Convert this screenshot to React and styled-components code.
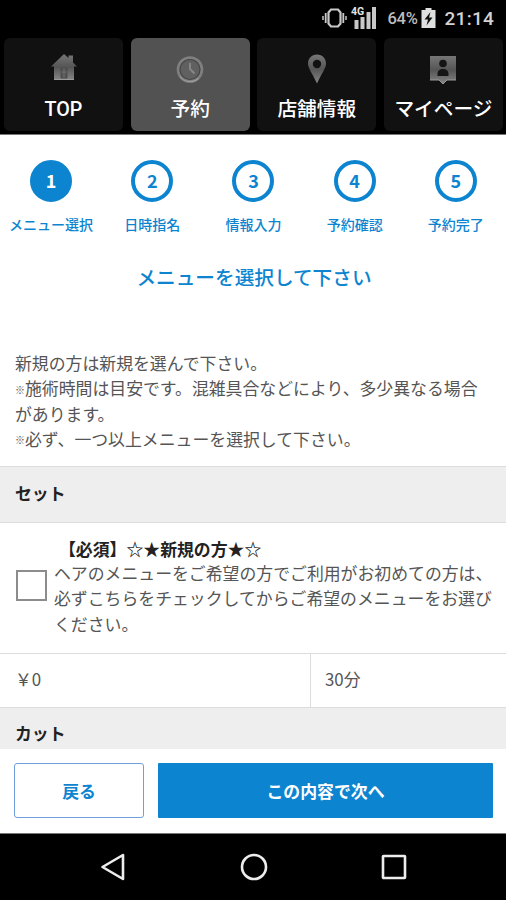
import React from 'react';
import styled, { createGlobalStyle, css } from 'styled-components';

const BLUE = '#0d84cf';
const LINE = '#dcdcdc';

const GlobalStyle = createGlobalStyle`
  * { box-sizing: border-box; }
  body {
    margin: 0;
    background: #fff;
    font-family: Roboto, "Noto Sans CJK JP", sans-serif;
    font-size: 16.87px;
    line-height: 25.3px;
    color: #555;
  }
  button { font: inherit; margin: 0; padding: 0; border: 0; }
`;

const Screen = styled.div`
  width: 506px;
  height: 900px;
  display: flex;
  flex-direction: column;
  overflow: hidden;
  background: #fff;
`;

const StatusBar = styled.header`
  flex: none;
  height: 36px;
  padding: 0 12px 0 0;
  display: flex;
  justify-content: flex-end;
  align-items: center;
  background: #000;
  color: #d2d2d2;
`;

const StatusIcon = styled.svg`
  display: block;
  margin-right: ${(p) => p.$gap}px;
`;

const Battery = styled.span`
  padding-top: 1px;
  font-size: 16.5px;
  font-weight: 500;
  letter-spacing: -0.3px;
  color: #bdbdbd;
  margin-right: 3px;
`;

const Clock = styled.span`
  padding-top: 2px;
  font-size: 19px;
  font-weight: 500;
  letter-spacing: 0.25px;
`;

const TabBar = styled.nav`
  flex: none;
  height: 99px;
  padding: 2px 3px 3px 4px;
  display: grid;
  grid-template-columns: repeat(4, 119px);
  justify-content: space-between;
  background: #000;
  border-bottom: 1px solid #777;
`;

const Tab = styled.button`
  display: flex;
  flex-direction: column;
  align-items: center;
  padding-top: 14px;
  border-radius: 6px;
  background: ${(p) => (p.$active ? '#525252' : '#111')};
  color: #fff;
  font-size: 19.7px;
  font-weight: 500;
  line-height: 28px;
  white-space: nowrap;
`;

const TabIcon = styled.svg`
  display: block;
  margin-bottom: 12px;
`;

const Main = styled.main`
  flex: 1;
  min-height: 0;
  overflow: hidden;
`;

const Steps = styled.ol`
  list-style: none;
  margin: 0;
  padding: 25px 0 0 0.5px;
  display: grid;
  grid-template-columns: repeat(5, 101.2px);
`;

const Step = styled.li`
  display: flex;
  flex-direction: column;
  align-items: center;
  color: ${BLUE};
  font-size: 14px;
  font-weight: 500;
  line-height: 20px;
  white-space: nowrap;
`;

const StepNumber = styled.span`
  width: 42px;
  height: 42px;
  margin-bottom: 13px;
  padding-bottom: 3px;
  display: flex;
  align-items: center;
  justify-content: center;
  border: 4px solid ${BLUE};
  border-radius: 50%;
  font-family: "Noto Sans CJK JP", sans-serif;
  font-size: 18px;
  font-weight: 700;
  ${(p) => p.$active && css`
    background: ${BLUE};
    color: #fff;
  `}
`;

const Title = styled.h1`
  margin: 29px 0 0;
  padding-left: 2px;
  text-align: center;
  color: ${BLUE};
  font-size: 19.65px;
  line-height: 30px;
  font-weight: 500;
`;

const Notes = styled.div`
  padding: 58px 15px 13px;
`;

const Note = styled.p`
  margin: 0;
`;

const Mark = styled.span`
  display: inline-block;
  width: 10px;
  font-size: 10px;
  font-weight: 700;
  vertical-align: 1.5px;
  line-height: 1;
  white-space: nowrap;
`;

const SectionHeader = styled.h2`
  margin: 0;
  height: 57px;
  padding: ${(p) => p.$top || 15}px 15px 0;
  border-top: 1.5px solid ${LINE};
  border-bottom: 1.5px solid ${LINE};
  background: #eee;
  color: #222;
  font-size: 16.87px;
  line-height: 25px;
  font-weight: 700;
`;

const MenuItem = styled.label`
  height: 130px;
  padding: 13px 12px 0 16px;
  display: flex;
`;

const Checkbox = styled.span`
  flex: none;
  width: 31px;
  height: 31px;
  margin: 34px 7px 0 0;
  border: 2px solid #8c8c8c;
  background: #fff;
`;

const ItemText = styled.div`
  min-width: 0;
`;

const ItemName = styled.div`
  margin-bottom: 0.5px;
  padding-left: 5px;
  color: #222;
  font-weight: 700;
  font-family: "Noto Sans CJK JP", sans-serif;
`;

const Details = styled.div`
  height: 54px;
  display: grid;
  grid-template-columns: 311px 1fr;
  border-top: 1px solid ${LINE};
`;

const Detail = styled.div`
  padding: 12px 14px 0 ${(p) => (p.$divided ? '14px' : '15px')};
  font-family: "Noto Sans CJK JP", sans-serif;
  ${(p) => !p.$divided && css`
    border-right: 1px solid ${LINE};
  `}
`;

const Actions = styled.footer`
  flex: none;
  height: 85px;
  padding: 14px 13px 15px 14px;
  display: grid;
  grid-template-columns: 130px 1fr;
  gap: 14px;
  background: #fff;
  border-bottom: 1px solid #777;
`;

const ActionButton = styled.button`
  padding-top: 4px;
  border-radius: 3px;
  font-weight: 700;
  ${(p) => p.$primary
    ? css`
      background: ${BLUE};
      color: #fff;
      border-radius: 1px;
    `
    : css`
      background: #fff;
      color: ${BLUE};
      && { border: 1px solid #6f9fdc; }
    `}
`;

const SystemBar = styled.div`
  flex: none;
  height: 66px;
  padding: 0 99px 1px 100px;
  display: flex;
  align-items: center;
  justify-content: space-between;
  background: #000;
`;

const SystemIcon = styled.svg`
  display: block;
  fill: none;
  stroke: #ededed;
  stroke-width: 2.6;
  stroke-linejoin: round;
`;

const Gradient = ({ id }) => (
  <defs>
    <linearGradient id={id} x1="0" y1="0" x2="0" y2="1">
      <stop offset="0" stopColor="#777" />
      <stop offset="0.5" stopColor="#555" />
      <stop offset="1" stopColor="#858585" />
    </linearGradient>
  </defs>
);

const HomeIcon = () => (
  <TabIcon width="28" height="32" viewBox="0 0 28 32">
    <Gradient id="home" />
    <path fill="url(#home)" d="M14 2 L18.5 6 V3.500 H23 V10.5 L27 14.5 H24 V28 H4 V14.5 H1 Z" />
    <path d="M11 16h6v10h-6z" fill="#555" stroke="#444" strokeWidth="0.8" />
    <path d="M14 16v10 M11 20h6" stroke="#777" strokeWidth="0.7" />
    <path d="M4 27.5h20" stroke="#999" strokeWidth="1" />
  </TabIcon>
);

const ClockIcon = () => (
  <TabIcon width="28" height="32" viewBox="0 0 28 32">
    <circle cx="14" cy="17.5" r="11.8" fill="#676767" stroke="#7f7f7f" strokeWidth="3" />
    <circle cx="14" cy="17.5" r="10" fill="#606060" stroke="#464646" strokeWidth="1.2" />
    <path d="M14 11v6l4.500 4.500" fill="none" stroke="#858585" strokeWidth="2" />
    <path d="M4 24.5a12.5 12.5 0 0 0 18.500 2" fill="none" stroke="#999" strokeWidth="1.2" />
  </TabIcon>
);

const PinIcon = () => (
  <TabIcon width="28" height="32" viewBox="0 0 28 32">
    <Gradient id="pin" />
    <path
      fill="url(#pin)"
      fillRule="evenodd"
      d="M14 2.500C8.500 2.500 5 6.500 5 11.500c0 5 3.500 8 9 20c5.500-12 9-15 9-20c0-5-3.500-9-9-9z M14 7.800a4.200 4.200 0 1 1 0 8.400a4.200 4.200 0 1 1 0-8.400z"
    />
  </TabIcon>
);

const ProfileIcon = () => (
  <TabIcon width="28" height="32" viewBox="0 0 28 32">
    <Gradient id="profile" />
    <path fill="url(#profile)" d="M1 4h26v24h-9l-4 4l-4-4H1z" />
    <circle cx="14" cy="11.500" r="3.800" fill="#151515" />
    <path d="M8.500 24v-2c0-3 2-5 5.500-5s5.500 2 5.500 5v2z" fill="#151515" />
    <path d="M1 28h9l4 4 4-4h9" fill="none" stroke="#999" strokeWidth="1" />
  </TabIcon>
);

const TABS = [
  { label: 'TOP', Icon: HomeIcon },
  { label: '予約', Icon: ClockIcon, active: true },
  { label: '店舗情報', Icon: PinIcon },
  { label: 'マイページ', Icon: ProfileIcon },
];

const STEPS = ['メニュー選択', '日時指名', '情報入力', '予約確認', '予約完了'];

export default function App() {
  return (
    <Screen>
      <GlobalStyle />
      <StatusBar>
        <StatusIcon $gap={4} width="25" height="20" viewBox="0 0 25 20" fill="none" stroke="#c8c8c8">
          <path d="M9 1.500h7l2.500 3v11l-2.500 3H9l-2.500-3v-11z" strokeWidth="2.200" />
          <path d="M3.700 5v10 M21.300 5v10" strokeWidth="1.800" />
          <path d="M1 8v4 M24 8v4" strokeWidth="1.500" />
        </StatusIcon>
        <StatusIcon $gap={11} width="26" height="25" viewBox="0 0 26 25">
          <path d="M3.500 14h4v9h-4z M9.500 11h4v12h-4z M15.500 6h4v17h-4z M21 1h4v22h-4z" fill="#c8c8c8" />
          <text x="0" y="9" fill="#e4e4e4" fontFamily="Roboto, sans-serif" fontSize="10.500" fontWeight="700">4G</text>
        </StatusIcon>
        <Battery>64%</Battery>
        <StatusIcon $gap={9} width="15" height="20" viewBox="0 0 15 20">
          <path d="M4.500 0h6v2H14.500v18H0.500V2h4z" fill="#e0e0e0" />
          <path d="M9.500 4L3.500 11.500h3.500L5.500 17.500L11.500 9.500H8z" fill="#111" />
        </StatusIcon>
        <Clock>21:14</Clock>
      </StatusBar>

      <TabBar>
        {TABS.map(({ label, Icon, active }) => (
          <Tab key={label} $active={active}>
            <Icon />
            {label}
          </Tab>
        ))}
      </TabBar>

      <Main>
        <Steps>
          {STEPS.map((label, i) => (
            <Step key={label}>
              <StepNumber $active={i === 0}>{i + 1}</StepNumber>
              {label}
            </Step>
          ))}
        </Steps>
        <Title>メニューを選択して下さい</Title>
        <Notes>
          <Note>新規の方は新規を選んで下さい。</Note>
          <Note><Mark>※</Mark>施術時間は目安です。混雑具合などにより、多少異なる場合があります。</Note>
          <Note><Mark>※</Mark>必ず、一つ以上メニューを選択して下さい。</Note>
        </Notes>
        <SectionHeader>セット</SectionHeader>
        <MenuItem>
          <Checkbox role="checkbox" aria-checked="false" />
          <ItemText>
            <ItemName>【必須】☆★新規の方★☆</ItemName>
            <Note>ヘアのメニューをご希望の方でご利用がお初めての方は、必ずこちらをチェックしてからご希望のメニューをお選びください。</Note>
          </ItemText>
        </MenuItem>
        <Details>
          <Detail>￥0</Detail>
          <Detail $divided>30分</Detail>
        </Details>
        <SectionHeader $top={14}>カット</SectionHeader>
      </Main>

      <Actions>
        <ActionButton>戻る</ActionButton>
        <ActionButton $primary>この内容で次へ</ActionButton>
      </Actions>

      <SystemBar>
        <SystemIcon width="26" height="30" viewBox="0 0 26 30">
          <path d="M23 3v24L2.500 15z" />
        </SystemIcon>
        <SystemIcon width="28" height="28" viewBox="0 0 28 28">
          <circle cx="14" cy="14" r="12" />
        </SystemIcon>
        <SystemIcon width="26" height="26" viewBox="0 0 26 26">
          <rect x="2" y="2" width="22" height="22" rx="0.500" />
        </SystemIcon>
      </SystemBar>
    </Screen>
  );
}
